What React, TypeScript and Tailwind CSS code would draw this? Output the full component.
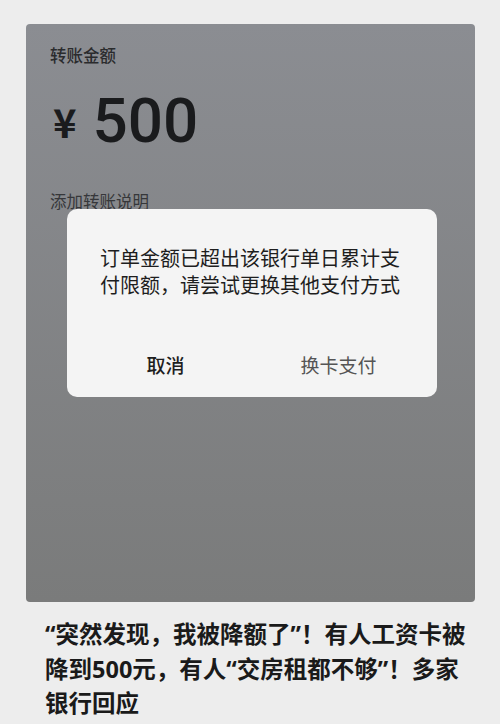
export default function App() {
  return (
    <div
      className="h-[724px] w-[500px] overflow-hidden bg-[#ededed] pt-[24px] pl-[26px]"
      style={{ fontFamily: '"Noto Sans CJK SC", "Noto Sans", sans-serif' }}
    >
      <div className="relative h-[578px] w-[449px] rounded-[4px] bg-gradient-to-b from-[#8b8d92] to-[#7a7b7b] pl-[24px] pt-[20px]">
        <div className="text-[16.5px] font-medium leading-[22px] text-[#2a2b2d]">转账金额</div>
        <div className="mt-[24px] flex items-center text-[#1a1b1d]">
          <span className="ml-[3px] text-[40px] font-bold leading-none">¥</span>
          <span
            className="ml-[16px] text-[62px] font-medium leading-none"
            style={{ fontFamily: 'Roboto, "Noto Sans", sans-serif' }}
          >
            500
          </span>
        </div>
        <div className="mt-[38px] text-[16.5px] leading-[22px] text-[#36373a]">添加转账说明</div>

        <div className="absolute left-[41px] top-[185px] flex h-[188px] w-[370px] flex-col rounded-[10px] bg-[#f4f4f4]">
          <p className="px-[33px] pt-[35px] text-[20px] leading-[27px] text-[#1e1e1e]">
            订单金额已超出该银行单日累计支付限额，请尝试更换其他支付方式
          </p>
          <div className="mt-auto grid grid-cols-2 px-[12px] pb-[20px] text-[19px] leading-[24px]">
            <button className="text-center font-medium text-[#1e1e1e]">取消</button>
            <button className="text-center text-[#555555]">换卡支付</button>
          </div>
        </div>
      </div>

      <h1
        className="mt-[15px] w-[446px] pl-[19px] text-[23.5px] font-bold leading-[34.5px] text-[#1a1a1a]"
        style={{ fontFamily: '"Noto Sans", "Noto Sans CJK SC", sans-serif' }}
      >
        “突然发现，我被降额了”！有人工资卡被降到500元，有人“交房租都不够”！多家银行回应
      </h1>
    </div>
  )
}
